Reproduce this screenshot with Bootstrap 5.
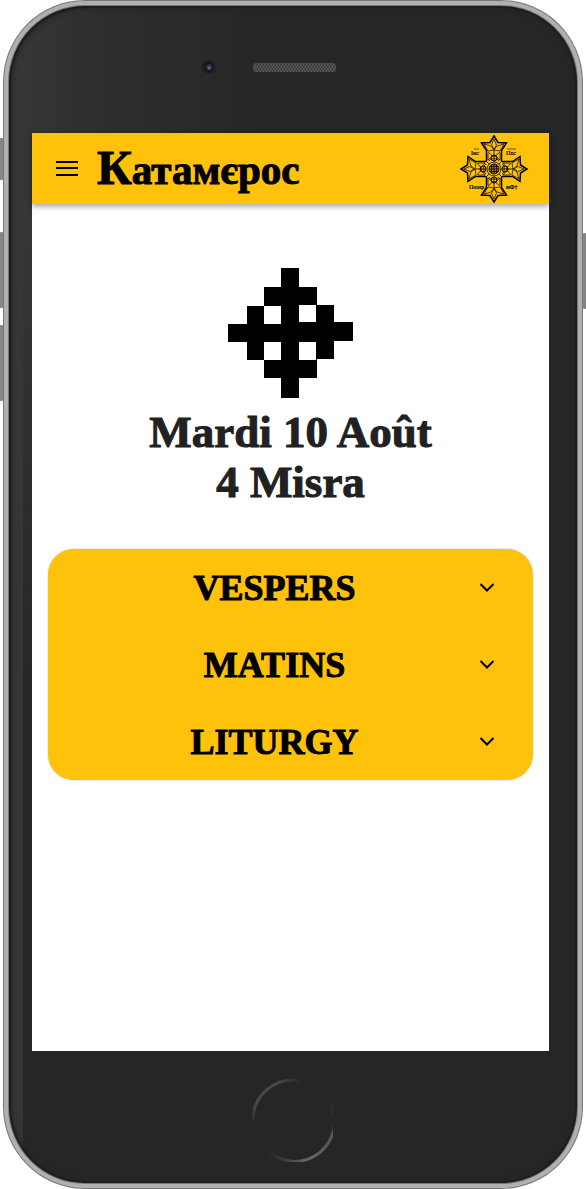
<!DOCTYPE html>
<html lang="fr">
<head>
<meta charset="utf-8">
<meta name="viewport" content="width=device-width, initial-scale=1">
<title>Катамєрос</title>
<link href="https://cdn.jsdelivr.net/npm/bootstrap@5.3.0/dist/css/bootstrap.min.css" rel="stylesheet">
<style>
  :root { --gold: #ffc20a; --ink: #212121; --serif: "Liberation Serif", serif; }
  body { background: #fff; font-family: var(--serif); }
  .stage { padding: 0 3px; }
  .phone {
    border-radius: 82px;
    padding: 0 34px 0 29px;
    background:
      linear-gradient(180deg, rgba(38,38,38,0) 20%, #262626 60%) right / calc(100% - 20px) 100% no-repeat,
      linear-gradient(90deg, #383838 0, #303030 70px, #262626 260px);
    box-shadow:
      inset 0 0 0 1px #777, inset 0 0 0 5px #b0b0b0, inset 0 0 0 6px #777,
      inset 0 0 0 8px #1d1d1d, inset 0 0 5px 9px #242424;
  }
  .side-key { position: absolute; z-index: -1; width: 5px; border-radius: 3px; background: #858585; }
  .key-mute { left: -4px; top: 138px; height: 42px; }
  .key-up { left: -4px; top: 232px; height: 76px; }
  .key-down { left: -4px; top: 325px; height: 76px; }
  .key-power { right: -4px; top: 233px; height: 76px; }
  .bezel-top { height: 133px; padding-right: 46px; }
  .bezel-bottom { height: 138px; }
  .screen { background: #fff; }
  .topbar { background: var(--gold); height: 71px; padding: 0 20px 0 23px; box-shadow: 0 2px 6px rgba(0,0,0,.4); }
  .menu-btn { line-height: 0; }
  .brand { font-size: 41px; line-height: 48px; font-weight: 700; color: #000; margin-left: 18px; -webkit-text-stroke: 1px #000; }
  .brand::first-letter { font-size: 48px; }
  .day { padding: 64px 16px 0; }
  .day-title { font-size: 45px; line-height: 50px; font-weight: 700; color: var(--ink); margin: 9px 0 42px; -webkit-text-stroke: 1px var(--ink); }
  .services { background: var(--gold); border-radius: 26px; box-shadow: 0 0 2px rgba(0,0,0,.25); }
  .service { height: 77px; padding: 0 34px 0 26px; font-size: 36px; line-height: 42px; font-weight: 700; color: #000; -webkit-text-stroke: 1px #000; }
</style>
</head>
<body>
<div class="stage min-vh-100 d-flex flex-column">
  <div class="phone position-relative flex-grow-1 d-flex flex-column">
    <span class="side-key key-mute"></span>
    <span class="side-key key-up"></span>
    <span class="side-key key-down"></span>
    <span class="side-key key-power"></span>

    <div class="bezel-top d-flex justify-content-center">
      <svg width="140" height="133" viewBox="0 0 140 133" aria-hidden="true">
        <defs>
          <pattern id="mesh" width="3" height="4" patternUnits="userSpaceOnUse">
            <rect width="3" height="4" fill="#3c3c3c"/>
            <circle cx="0.8" cy="1" r="0.8" fill="#686868"/><circle cx="2.3" cy="3" r="0.8" fill="#686868"/>
          </pattern>
        </defs>
        <circle cx="11" cy="67" r="7" fill="#1f1f28"/>
        <circle cx="11" cy="67" r="5" fill="#16161f"/>
        <circle cx="11" cy="67" r="3" fill="#30303c"/>
        <circle cx="11" cy="68" r="1.5" fill="#686878"/>
        <rect x="55" y="63" width="83" height="9" rx="3" fill="url(#mesh)"/>
      </svg>
    </div>

    <main class="screen flex-grow-1">
      <header class="topbar d-flex align-items-center">
        <button type="button" class="menu-btn btn p-0 border-0" aria-label="Menu">
          <svg width="24" height="18" viewBox="0 0 24 18"><path d="M1 2H23M1 8H23M1 15H23" stroke="#000" stroke-width="2"/></svg>
        </button>
        <a href="#" class="brand d-block text-decoration-none">Катамєрос</a>
        <svg class="ms-auto" width="70" height="70" viewBox="-35 -35 70 70" role="img" aria-label="Croix copte">
          <defs>
            <g id="arm" fill="none" stroke="#000">
              <path d="M-7.500-8V-18.500L-12.500-26L-4-26.500L0-33L4-26.500L12.500-26L7.500-18.500V-8" stroke-width="1.500"/>
              <path d="M0-30L-2.500-24L0-20L2.500-24ZM-10-25L-3-23L0-19L-6-18ZM10-25L3-23L0-19L6-18ZM-6-17L0-12L6-17M-6-16V-9L0-14L6-9V-16" stroke-width=".7"/>
              <circle cx="0" cy="-11" r="3" stroke-width="1"/>
              <path d="M0-19V-8M-5-8C-4-11 4-11 5-8" stroke-width=".8"/>
            </g>
          </defs>
          <use href="#arm"/><use href="#arm" transform="rotate(90)"/>
          <use href="#arm" transform="rotate(180)"/><use href="#arm" transform="rotate(270)"/>
          <g fill="none" stroke="#000" stroke-width=".8">
            <circle r="7"/><circle r="5" stroke-width="1" fill="#000" fill-opacity=".35"/>
            <path d="M-5 0H5M0-5V5M-4-2.500H4M-4 2.500H4M-2.500-4V4M2.500-4V4M-8-8L-5-5M8-8L5-5M-8 8L-5 5M8 8L5 5"/>
            <path d="M-20-20H-15M13-20H22" stroke-width=".6"/>
          </g>
          <g font-family="Liberation Serif, serif" font-size="6" fill="#000" stroke="#000" stroke-width=".2">
            <text x="-23" y="-14">Iнс</text>
            <text x="12" y="-14">Пхс</text>
            <text x="-25" y="20">Пшнр</text>
            <text x="12" y="20">мФ†</text>
          </g>
        </svg>
      </header>

      <section class="day text-center">
        <svg class="d-block mx-auto" width="125" height="130" viewBox="0 0 125 130" aria-hidden="true">
          <path fill="#000" fill-rule="evenodd" d="M53 0H71V19H89V37H106V54H125V73H106V91H89V110H71V130H53V110H36V92H19V74H0V56H19V38H36V19H53ZM36 38V56H53V38ZM71 37V54H88V37ZM36 74V92H53V74ZM71 74V92H88V74Z"/>
        </svg>
        <h1 class="day-title">Mardi 10 Août<br>4 Misra</h1>
        <div class="services">
          <button type="button" class="service btn border-0 w-100 d-flex align-items-center" aria-expanded="false">
            <span class="flex-grow-1">VESPERS</span>
            <svg width="24" height="24" viewBox="0 0 24 24" fill="none" stroke="#000" stroke-width="2"><path d="M5.500 8L12 14.500L18.500 8"/></svg>
          </button>
          <button type="button" class="service btn border-0 w-100 d-flex align-items-center" aria-expanded="false">
            <span class="flex-grow-1">MATINS</span>
            <svg width="24" height="24" viewBox="0 0 24 24" fill="none" stroke="#000" stroke-width="2"><path d="M5.500 8L12 14.500L18.500 8"/></svg>
          </button>
          <button type="button" class="service btn border-0 w-100 d-flex align-items-center" aria-expanded="false">
            <span class="flex-grow-1">LITURGY</span>
            <svg width="24" height="24" viewBox="0 0 24 24" fill="none" stroke="#000" stroke-width="2"><path d="M5.500 8L12 14.500L18.500 8"/></svg>
          </button>
        </div>
      </section>
    </main>

    <div class="bezel-bottom d-flex justify-content-center align-items-center">
      <button type="button" class="btn p-0 border-0 rounded-circle" aria-label="Accueil">
        <svg class="d-block" width="84" height="84" viewBox="0 0 84 84" fill="none" stroke-width="3">
          <defs>
            <linearGradient id="ringA" gradientUnits="userSpaceOnUse" x1="2" y1="46" x2="52" y2="0"><stop offset="0" stop-color="#262626"/><stop offset=".25" stop-color="#484848"/><stop offset=".7" stop-color="#484848"/><stop offset="1" stop-color="#262626"/></linearGradient>
            <linearGradient id="ringB" gradientUnits="userSpaceOnUse" x1="20" y1="76" x2="84" y2="26"><stop offset="0" stop-color="#262626"/><stop offset=".3" stop-color="#666"/><stop offset=".75" stop-color="#555"/><stop offset="1" stop-color="#262626"/></linearGradient>
          </defs>
          <path d="M4 42A40 40 0 0 1 50 2.500" stroke="url(#ringA)"/>
          <path d="M82 27A40 40 0 0 1 21 75" stroke="url(#ringB)"/>
        </svg>
      </button>
    </div>
  </div>
</div>
<script src="https://cdn.jsdelivr.net/npm/bootstrap@5.3.0/dist/js/bootstrap.bundle.min.js"></script>
</body>
</html>
